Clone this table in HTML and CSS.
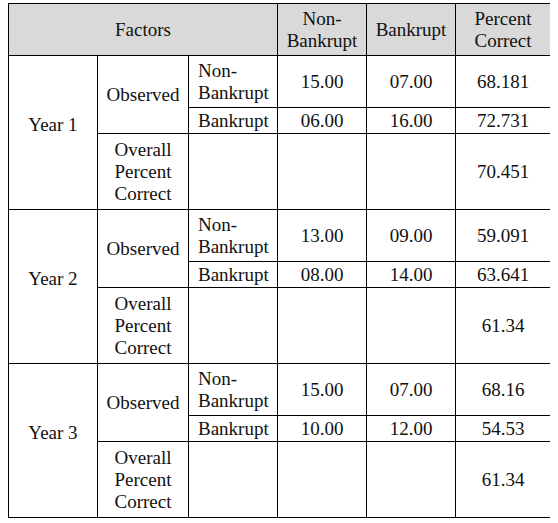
FILE: index.html
```html
<!DOCTYPE html>
<html>
<head>
<meta charset="utf-8">
<link rel="stylesheet" href="styles.css">
</head>
<body>
<table class="grid">
  <colgroup>
    <col class="c1"><col class="c2"><col class="c3"><col class="c4"><col class="c5"><col class="c6">
  </colgroup>
  <tr class="head">
    <th colspan="3">Factors</th>
    <th>Non-<br>Bankrupt</th>
    <th>Bankrupt</th>
    <th>Percent<br>Correct</th>
  </tr>
  <tr class="r-nb">
    <td rowspan="3" class="year">Year 1</td>
    <td rowspan="2">Observed</td>
    <td class="sub">Non-<br>Bankrupt</td>
    <td>15.00</td><td>07.00</td><td>68.181</td>
  </tr>
  <tr class="r-b">
    <td class="sub">Bankrupt</td>
    <td>06.00</td><td>16.00</td><td>72.731</td>
  </tr>
  <tr class="r-o">
    <td>Overall<br>Percent<br>Correct</td>
    <td></td><td></td><td></td><td>70.451</td>
  </tr>
  <tr class="r-nb">
    <td rowspan="3" class="year">Year 2</td>
    <td rowspan="2">Observed</td>
    <td class="sub">Non-<br>Bankrupt</td>
    <td>13.00</td><td>09.00</td><td>59.091</td>
  </tr>
  <tr class="r-b">
    <td class="sub">Bankrupt</td>
    <td>08.00</td><td>14.00</td><td>63.641</td>
  </tr>
  <tr class="r-o">
    <td>Overall<br>Percent<br>Correct</td>
    <td></td><td></td><td></td><td>61.34</td>
  </tr>
  <tr class="r-nb">
    <td rowspan="3" class="year">Year 3</td>
    <td rowspan="2">Observed</td>
    <td class="sub">Non-<br>Bankrupt</td>
    <td>15.00</td><td>07.00</td><td>68.16</td>
  </tr>
  <tr class="r-b">
    <td class="sub">Bankrupt</td>
    <td>10.00</td><td>12.00</td><td>54.53</td>
  </tr>
  <tr class="r-o">
    <td>Overall<br>Percent<br>Correct</td>
    <td></td><td></td><td></td><td>61.34</td>
  </tr>
</table>
</body>
</html>
```
FILE: styles.css
```css
html, body {
  background: #fff;
}
body {
  margin: 3px 8px;
  font-family: "Liberation Serif", "Times New Roman", serif;
  font-size: 19px;
  line-height: 22px;
  color: #111;
}
.grid {
  border-collapse: collapse;
  table-layout: fixed;
  width: 542px;
}
.c1 { width: 89px; }
.c2 { width: 91px; }
.c3 { width: 89px; }
.c4 { width: 89px; }
.c5 { width: 89px; }
.c6 { width: 95px; }
.grid th,
.grid td {
  border: 1px solid #000;
  padding: 0;
  text-align: center;
  vertical-align: middle;
  font-weight: normal;
}
.head th {
  background: #d9d9d9;
}
.head { height: 52px; }
.r-nb { height: 52px; }
.r-b { height: 26px; }
.r-o { height: 76px; }
.grid td.sub {
  text-align: left;
  padding-left: 9px;
}
.grid td.year {
  padding-bottom: 16px;
}
```
